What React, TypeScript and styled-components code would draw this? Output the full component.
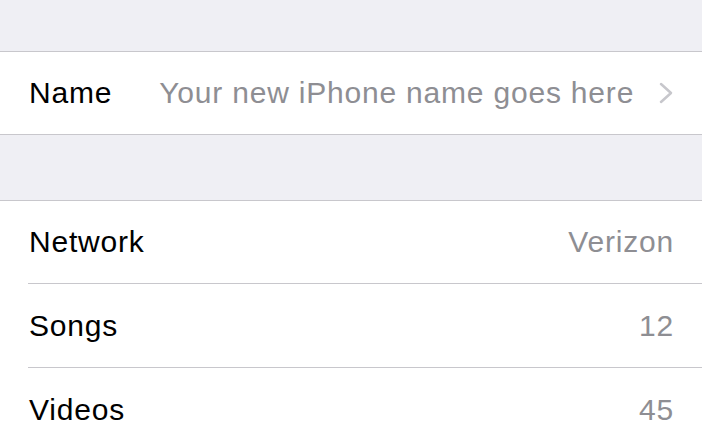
import styled, { createGlobalStyle } from 'styled-components'

const GlobalStyle = createGlobalStyle`
  html, body {
    margin: 0;
    padding: 0;
    background: #efeff4;
  }
  body {
    font-family: "Liberation Sans", Arial, sans-serif;
    -webkit-font-smoothing: antialiased;
  }
`

const stats = [
  { label: 'Network', value: 'Verizon' },
  { label: 'Songs', value: '12' },
  { label: 'Videos', value: '45' },
]

export default function App() {
  return (
    <Page>
      <GlobalStyle />
      <Spacer $height={51} />
      <Group>
        <Row>
          <Label>Name</Label>
          <Placeholder>Your new iPhone name goes here</Placeholder>
          <Chevron width="14" height="22" viewBox="0 0 14 22">
            <path d="M2 2 L12 11 L2 20" fill="none" stroke="#c7c7cc" strokeWidth="2.5" strokeLinecap="round" strokeLinejoin="round" />
          </Chevron>
        </Row>
      </Group>
      <Spacer $height={65} />
      <Group>
        {stats.map((s, i) => (
          <Row key={s.label} $divider={i > 0}>
            <Label>{s.label}</Label>
            <Value>{s.value}</Value>
          </Row>
        ))}
      </Group>
    </Page>
  )
}

const Page = styled.div`
  width: 702px;
  height: 439px;
  overflow: hidden;
  background: #efeff4;
`

const Spacer = styled.div<{ $height: number }>`
  height: ${p => p.$height}px;
`

const Group = styled.div`
  background: #fff;
  border-top: 1px solid #c8c7cc;
  border-bottom: 1px solid #c8c7cc;
`

const Row = styled.div<{ $divider?: boolean }>`
  position: relative;
  display: flex;
  align-items: center;
  height: 82px;
  padding: 0 29px;
  margin-top: ${p => (p.$divider ? '2px' : '0')};
  color: #000;
  font-size: 30px;
  letter-spacing: 0.8px;

  &::before {
    content: '';
    display: ${p => (p.$divider ? 'block' : 'none')};
    position: absolute;
    left: 28px;
    right: 0;
    top: -2px;
    height: 1px;
    background: #c8c7cc;
  }
`

const Label = styled.span`
  flex-grow: 0;
  white-space: nowrap;
`

const Placeholder = styled.span`
  flex-grow: 1;
  margin-left: 47px;
  color: #8e8e93;
  white-space: nowrap;
`

const Value = styled.span`
  flex-grow: 1;
  text-align: right;
  color: #8e8e93;
  white-space: nowrap;
  margin-right: -1px;
`

const Chevron = styled.svg`
  flex-shrink: 0;
`
